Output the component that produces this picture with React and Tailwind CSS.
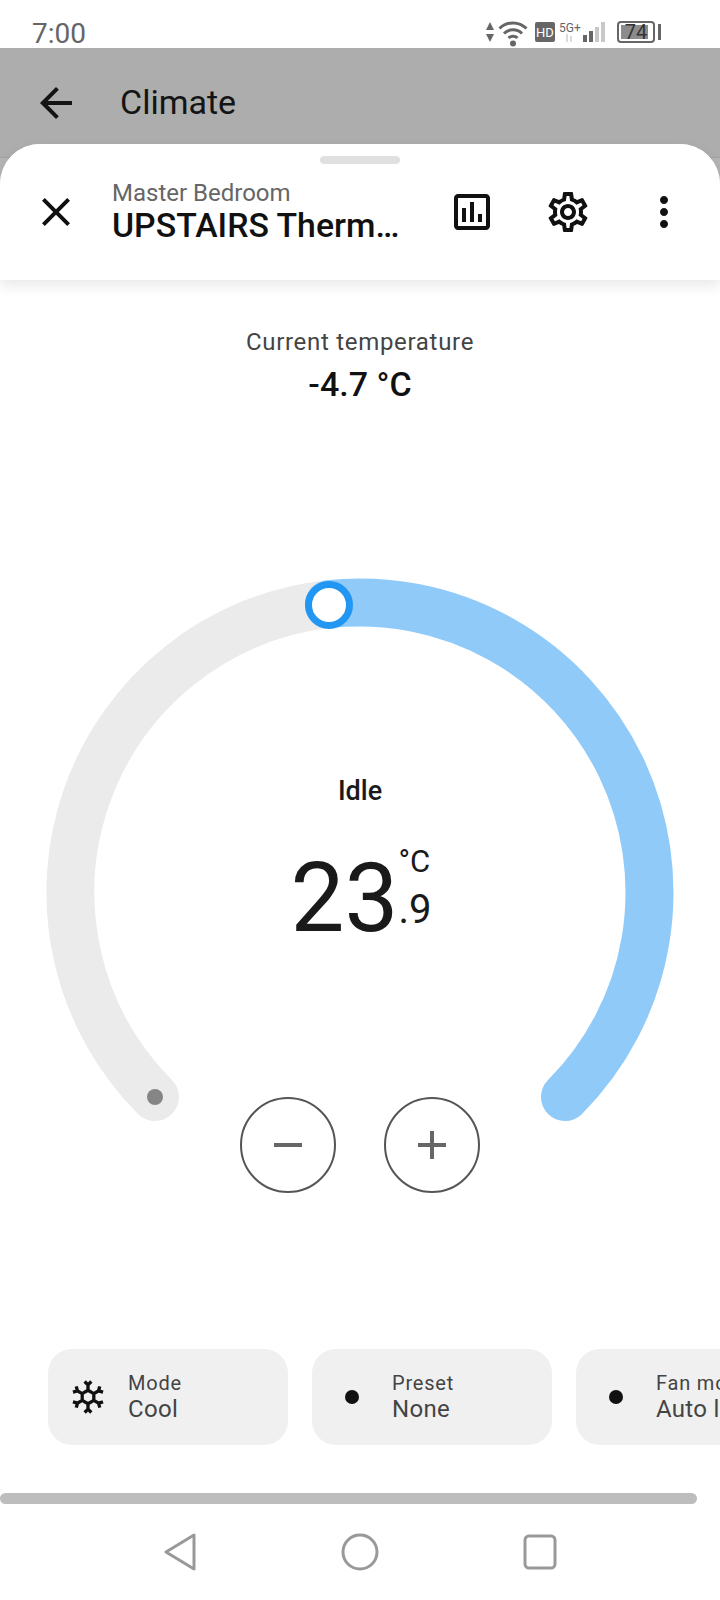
import React from 'react';

const FONT = "font-['Roboto',sans-serif]";

const MaterialIcon = ({ d, size = 48, className = '' }) => (
    <svg width={size} height={size} viewBox="0 0 24 24" fill="currentColor" className={className}>
        <path d={d} />
    </svg>
);

const ICONS = {
    back: 'M20 11H7.83l5.59-5.59L12 4l-8 8 8 8 1.41-1.41L7.83 13H20v-2z',
    close: 'M19 6.41L17.59 5 12 10.59 6.41 5 5 6.41 10.59 12 5 17.59 6.41 19 12 13.41 17.59 19 19 17.59 13.41 12z',
    chart: 'M9 17H7v-7h2v7zm4 0h-2V7h2v10zm4 0h-2v-4h2v4zm2 2H5V5h14v14zm0-16H5c-1.1 0-2 .9-2 2v14c0 1.1.9 2 2 2h14c1.1 0 2-.9 2-2V5c0-1.1-.9-2-2-2z',
    gear: 'M19.43 12.98c.04-.32.07-.64.07-.98 0-.34-.03-.66-.07-.98l2.11-1.65c.19-.15.24-.42.12-.64l-2-3.46c-.09-.16-.26-.25-.44-.25-.06 0-.12.01-.17.03l-2.49 1c-.52-.4-1.08-.73-1.69-.98l-.38-2.65C14.46 2.18 14.25 2 14 2h-4c-.25 0-.46.18-.49.42l-.38 2.65c-.61.25-1.17.59-1.69.98l-2.49-1c-.06-.02-.12-.03-.18-.03-.17 0-.34.09-.43.25l-2 3.46c-.13.22-.07.49.12.64l2.11 1.65c-.04.32-.07.65-.07.98 0 .33.03.66.07.98l-2.11 1.65c-.19.15-.24.42-.12.64l2 3.46c.09.16.26.25.44.25.06 0 .12-.01.17-.03l2.49-1c.52.4 1.08.73 1.69.98l.38 2.65c.03.24.24.42.49.42h4c.25 0 .46-.18.49-.42l.38-2.65c.61-.25 1.17-.59 1.69-.98l2.49 1c.06.02.12.03.18.03.17 0 .34-.09.43-.25l2-3.46c.12-.22.07-.49-.12-.64l-2.11-1.65zm-1.98-1.71c.04.31.05.52.05.73 0 .21-.02.43-.05.73l-.14 1.13.89.7 1.08.84-.7 1.21-1.27-.51-1.04-.42-.9.68c-.43.32-.84.56-1.25.73l-1.06.43-.16 1.13-.2 1.35h-1.4l-.19-1.35-.16-1.13-1.06-.43c-.43-.18-.83-.41-1.23-.71l-.91-.7-1.06.43-1.27.51-.7-1.21 1.08-.84.89-.7-.14-1.13c-.03-.31-.05-.54-.05-.74s.02-.43.05-.73l.14-1.13-.89-.7-1.08-.84.7-1.21 1.27.51 1.04.42.9-.68c.43-.32.84-.56 1.25-.73l1.06-.43.16-1.13.2-1.35h1.39l.19 1.35.16 1.13 1.06.43c.43.18.83.41 1.23.71l.91.7 1.06-.43 1.27-.51.7 1.21-1.07.85-.89.7.14 1.13zM12 8c-2.21 0-4 1.79-4 4s1.79 4 4 4 4-1.79 4-4-1.79-4-4-4zm0 6c-1.1 0-2-.9-2-2s.9-2 2-2 2 .9 2 2-.9 2-2 2z',
    more: 'M12 8c1.1 0 2-.9 2-2s-.9-2-2-2-2 .9-2 2 .9 2 2 2zm0 2c-1.1 0-2 .9-2 2s.9 2 2 2 2-.9 2-2-.9-2-2-2zm0 6c-1.1 0-2 .9-2 2s.9 2 2 2 2-.9 2-2-.9-2-2-2z',
    snowflake: 'M20.79,13.95L18.46,14.57L16.46,13.44V10.56L18.46,9.43L20.79,10.05L21.31,8.12L19.54,7.65L20,5.88L18.07,5.36L17.45,7.69L15.45,8.82L13,7.38V5.12L14.71,3.41L13.29,2L12,3.29L10.71,2L9.29,3.41L11,5.12V7.38L8.5,8.82L6.5,7.69L5.92,5.36L4,5.88L4.47,7.65L2.7,8.12L3.22,10.05L5.55,9.43L7.55,10.56V13.45L5.55,14.58L3.22,13.96L2.7,15.89L4.47,16.36L4,18.12L5.93,18.64L6.55,16.31L8.55,15.18L11,16.62V18.88L9.29,20.59L10.71,22L12,20.71L13.29,22L14.7,20.59L13,18.88V16.62L15.5,15.17L17.5,16.3L18.12,18.63L20,18.12L19.53,16.35L21.3,15.88L20.78,13.95M9.5,10.56L12,9.11L14.5,10.56V13.44L12,14.89L9.5,13.44V10.56Z',
};

const StatusBar = () => (
    <div className="h-12 flex items-center justify-between pt-4 pl-8 pr-[59px] bg-white">
        <span className="text-[28px] leading-none text-[#666666] mt-[3px]">7:00</span>
        <div className="flex items-center text-[#666666]">
            <svg width="8" height="20" viewBox="0 0 8 20" fill="currentColor">
                <path d="M4 0l4 8H0zM0 12h8l-4 8z" />
            </svg>
            <svg width="30" height="27" viewBox="0 0 30 27" fill="none" stroke="currentColor" strokeWidth="3" className="ml-[4px] mt-[2px]">
                <path d="M1.5 8.5C9 1 21 1 28.5 8.5M6 13.5c5-5 13-5 18 0M10.5 18c2.500-2.500 6.500-2.500 9 0" />
                <circle cx="15" cy="23.500" r="3" fill="currentColor" stroke="none" />
            </svg>
            <div className="ml-[7px] w-5 h-5 bg-[#666666] rounded-[2px] flex items-center justify-center text-white text-[13px] leading-none">HD</div>
            <div className="relative w-[24px] h-[20px] ml-[4px]">
                <span className="absolute left-0 top-0 text-[12px] leading-[12px] whitespace-nowrap">5G+</span>
                <svg width="24" height="20" viewBox="0 0 24 20" stroke="#d0d0d0" strokeWidth="1.500" className="absolute left-0 top-0">
                    <path d="M8 12v8M12 14v6" />
                </svg>
            </div>
            <svg width="22" height="20" viewBox="0 0 22 20">
                <rect x="0" y="13" width="4" height="7" fill="#666666" />
                <rect x="6" y="9" width="4" height="11" fill="#666666" />
                <rect x="12" y="5" width="4" height="15" fill="#c8c8c8" />
                <rect x="18" y="0" width="4" height="20" fill="#c8c8c8" />
            </svg>
            <div className="ml-[12px] flex items-center">
                <div className="relative w-[38px] h-[22px] border-2 border-[#666666] rounded-[4px] p-[2px]">
                    <div className="w-[27px] h-full bg-[#8c8c8c]" />
                    <span className="absolute inset-0 flex items-center justify-center text-[20px] leading-none text-[#333333]">74</span>
                </div>
                <div className="ml-[3px] w-[3px] h-4 bg-[#666666]" />
            </div>
        </div>
    </div>
);

const Chip = ({ label, value, icon }) => (
    <div className="w-60 h-24 shrink-0 rounded-3xl bg-[#f0f0f0] flex items-center pl-4">
        <div className="w-12 h-12 flex items-center justify-center text-[#111111]">{icon}</div>
        <div className="ml-4 flex flex-col whitespace-nowrap mt-[-1px]">
            <span className="text-[20px] leading-[26px] tracking-[0.8px] text-[#444444]">{label}</span>
            <span className="text-[24px] leading-[27px] tracking-[0.3px] text-[#444444]">{value}</span>
        </div>
    </div>
);

const Dot = () => <div className="w-[14px] h-[14px] rounded-full bg-[#111111]" />;

const Gauge = () => (
    <div className="relative w-[720px] h-[620px]">
        <svg width="720" height="620" viewBox="0 0 720 620" fill="none" className="block">
            {/* arc center sits at 360,322 with radius 290, running 270deg */}
            <path d="M155 527A290 290 0 0 1 329 34" stroke="#ebebeb" strokeWidth="48" strokeLinecap="round" />
            <path d="M329 34A290 290 0 0 1 565 527" stroke="#90caf9" strokeWidth="48" strokeLinecap="round" />
            <circle cx="155" cy="527" r="8" fill="#858585" />
            <circle cx="329" cy="35" r="20.500" fill="#ffffff" stroke="#2196f3" strokeWidth="7" />
        </svg>
        <div className="absolute left-0 right-0 top-[205px] flex flex-col items-center">
            <span className="text-[27px] leading-8 font-medium text-[#1a1a1a]">Idle</span>
            <div className="mt-[35px] flex items-start h-[100px] pl-[2px]">
                <span className="text-[96px] leading-[112px] text-[#1a1a1a]">23</span>
                <div className="flex flex-col">
                    <span className="text-[31px] leading-[40px] text-[#1a1a1a]">°C</span>
                    <span className="mt-[5px] text-[40px] leading-[46px] text-[#1a1a1a]">.9</span>
                </div>
            </div>
        </div>
        <div className="absolute left-0 right-0 top-[527px] flex justify-center gap-12">
            <button className="w-[96px] h-[96px] rounded-full border-2 border-[#555555] flex items-center justify-center">
                <svg width="28" height="4" viewBox="0 0 28 4" fill="#666666"><rect width="28" height="4" /></svg>
            </button>
            <button className="w-[96px] h-[96px] rounded-full border-2 border-[#555555] flex items-center justify-center">
                <svg width="28" height="28" viewBox="0 0 28 28" fill="#666666"><path d="M12 0h4v12h12v4H16v12h-4V16H0v-4h12z" /></svg>
            </button>
        </div>
    </div>
);

export default function App() {
    return (
        <div className={`w-[720px] h-[1600px] overflow-hidden bg-white ${FONT}`}>
            <StatusBar />

            {/* page behind the sheet, shows at the rounded corners */}
            <div className="h-[142px] bg-[#b4b4b4]">
                <div className="h-[110px] bg-[#adadad] border-b border-[#a3a3a3] flex items-center pl-8 text-[#141414]">
                    <MaterialIcon d={ICONS.back} />
                    <span className="ml-[40px] text-[34px] leading-none mt-[-2px]">Climate</span>
                </div>
            </div>

            <div className="relative mt-[-46px] bg-white rounded-t-[40px]">
                <div className="h-[136px] relative shadow-[0_6px_14px_rgba(0,0,0,0.09)] rounded-t-[40px] bg-white">
                    <div className="flex justify-center pt-3">
                        <div className="w-20 h-2 rounded-full bg-[#e0e0e0]" />
                    </div>
                    <div className="flex items-center mt-[15px] pl-8 pr-8 text-[#111111]">
                        <MaterialIcon d={ICONS.close} />
                        <div className="ml-8 w-[292px] flex flex-col">
                            <span className="text-[24px] leading-[28px] text-[#666666]">Master Bedroom</span>
                            <span className="text-[33.8px] leading-[38px] font-medium truncate">UPSTAIRS Thermostat</span>
                        </div>
                        <MaterialIcon d={ICONS.chart} className="ml-[44px]" />
                        <MaterialIcon d={ICONS.gear} className="ml-12" />
                        <MaterialIcon d={ICONS.more} className="ml-12" />
                    </div>
                </div>

                <div className="pt-[48px] flex flex-col items-center">
                    <span className="text-[24px] leading-7 tracking-[0.7px] text-[#444444]">Current temperature</span>
                    <span className="mt-[8px] text-[34px] leading-10 font-medium text-[#111111]">-4.7 °C</span>
                </div>

                <div className="mt-[166px]">
                    <Gauge />
                </div>

                <div className="mt-[159px] flex gap-6 pl-12 overflow-hidden">
                    <Chip label="Mode" value="Cool" icon={<MaterialIcon d={ICONS.snowflake} size={40} />} />
                    <Chip label="Preset" value="None" icon={<Dot />} />
                    <Chip label="Fan mode" value="Auto low" icon={<Dot />} />
                </div>

                <div className="mt-12 w-[697px] h-[11px] rounded-full bg-[#bdbdbd]" />

                <div className="mt-[29px] flex justify-center gap-[145px] text-[#999999]">
                    <svg width="36" height="38" viewBox="0 0 36 38" fill="none" stroke="currentColor" strokeWidth="3" strokeLinejoin="round" className="translate-x-[3px]">
                        <path d="M31 2L3 19l28 17z" />
                    </svg>
                    <svg width="38" height="38" viewBox="0 0 38 38" fill="none" stroke="currentColor" strokeWidth="3">
                        <circle cx="19" cy="19" r="17" />
                    </svg>
                    <svg width="36" height="38" viewBox="0 0 36 38" fill="none" stroke="currentColor" strokeWidth="3" className="translate-x-[-2px]">
                        <rect x="3" y="3" width="30" height="32" rx="4" />
                    </svg>
                </div>
            </div>
        </div>
    );
}
